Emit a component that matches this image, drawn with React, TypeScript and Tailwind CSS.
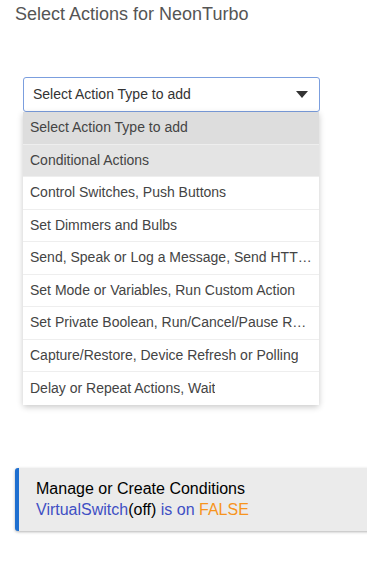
const options = [
  "Select Action Type to add",
  "Conditional Actions",
  "Control Switches, Push Buttons",
  "Set Dimmers and Bulbs",
  "Send, Speak or Log a Message, Send HTTP Request",
  "Set Mode or Variables, Run Custom Action",
  "Set Private Boolean, Run/Cancel/Pause Rules",
  "Capture/Restore, Device Refresh or Polling",
  "Delay or Repeat Actions, Wait",
];

const App = () => {
  return (
    <div className="w-[367px] h-[570px] bg-white overflow-hidden font-['Liberation_Sans',Arial,sans-serif]">
      <h1 className="pl-[15px] pt-[4px] text-[18px] leading-[21px] text-[#555]">
        Select Actions for NeonTurbo
      </h1>

      <div className="relative ml-[23px] mt-[52px] w-[297px]">
        <div className="flex items-center justify-between h-[35px] border border-[#7b9ede] rounded-[3px] bg-white pl-[9px] pr-[11px]">
          <span className="text-[14px] text-[#333]">Select Action Type to add</span>
          <svg width="12" height="7" viewBox="0 0 12 7">
            <path d="M0 0h12L6 7z" fill="#333" />
          </svg>
        </div>

        <ul className="w-[296px] bg-white rounded-b-[3px] shadow-[0_2px_6px_rgba(0,0,0,0.22)]">
          {options.map((opt, i) => (
            <li
              key={opt}
              className={`h-[32.5px] flex items-center px-[7px] text-[14px] text-[#444] border-b border-[#eeeeee] last:border-b-0 ${
                i === 0 ? "bg-[#dddddd]" : i === 1 ? "bg-[#e4e4e4]" : "bg-white"
              }`}
            >
              <span className="truncate">{opt}</span>
            </li>
          ))}
        </ul>
      </div>

      <div className="ml-[15px] mt-[63px] -mr-[10px] bg-[#ebebeb] border-l-[4px] border-[#1e6fd0] rounded-l-[3px] shadow-[0_1px_3px_rgba(0,0,0,0.3)] pl-[17px] pt-[10px] pb-[11px]">
        <div className="text-[16px] leading-[21px] text-black">Manage or Create Conditions</div>
        <div className="text-[16px] leading-[21px] text-[#3f4fc4]">
          VirtualSwitch<span className="text-black">(off)</span> is on{" "}
          <span className="text-[#f7941d]">FALSE</span>
        </div>
      </div>
    </div>
  );
};

export default App;
